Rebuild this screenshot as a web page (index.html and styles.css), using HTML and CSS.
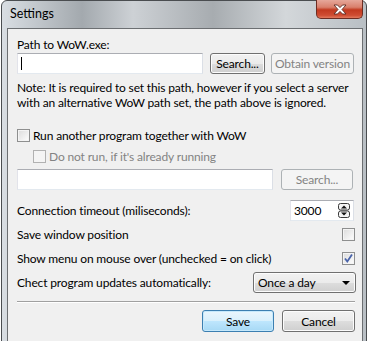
FILE: index.html
```html
<!DOCTYPE html>
<html lang="en">
<head>
    <meta charset="UTF-8">
    <title>Settings</title>
    <link rel="stylesheet" href="styles.css">
</head>
<body>

    <div class="ventana">
        <div class="titulo">
            <span class="titulo-texto">Settings</span>
            <div class="cerrar">
                <svg width="14" height="11" viewBox="0 0 14 11">
                    <path d="M1 1 L4.5 1 L7 3.6 L9.5 1 L13 1 L9 5.5 L13 10 L9.5 10 L7 7.4 L4.5 10 L1 10 L5 5.5 Z" fill="#fff" stroke="#5b2a22" stroke-width="0.9"/>
                </svg>
            </div>
        </div>

        <div class="cliente">
            <div class="etiqueta">Path to WoW.exe:</div>

            <div class="fila fila-ruta">
                <div class="caja caja-ruta"><span class="cursor"></span></div>
                <div class="boton boton-buscar">Search...</div>
                <div class="boton deshabilitado boton-version">Obtain version</div>
            </div>

            <p class="nota">Note: It is required to set this path, however if you select a server<br>with an alternative WoW path set, the path above is ignored.</p>

            <div class="fila fila-check fila-otro">
                <span class="check"></span>
                <span>Run another program together with WoW</span>
            </div>

            <div class="fila fila-check fila-sub gris">
                <span class="check deshabilitado"></span>
                <span>Do not run, if it's already running</span>
            </div>

            <div class="fila fila-programa">
                <div class="caja caja-programa"></div>
                <div class="boton deshabilitado boton-buscar2">Search...</div>
            </div>

            <div class="fila fila-opcion fila-timeout">
                <span>Connection timeout (miliseconds):</span>
                <div class="caja caja-numero">
                    <span>3000</span>
                    <svg class="flechas" width="12" height="15" viewBox="0 0 12 15">
                        <rect x="0.5" y="0.5" width="11" height="6.5" rx="2" fill="#f4f4f4" stroke="#3a3a3a"/>
                        <rect x="0.5" y="8" width="11" height="6.5" rx="2" fill="#f4f4f4" stroke="#3a3a3a"/>
                        <path d="M3 5.5 L6 2.5 L9 5.5 Z" fill="#111"/>
                        <path d="M3 9.5 L6 12.5 L9 9.5 Z" fill="#111"/>
                    </svg>
                </div>
            </div>

            <div class="fila fila-opcion fila-posicion">
                <span>Save window position</span>
                <span class="check"></span>
            </div>

            <div class="fila fila-opcion fila-menu">
                <span>Show menu on mouse over (unchecked = on click)</span>
                <span class="check marcado">
                    <svg width="11" height="11" viewBox="0 0 11 11">
                        <path d="M2 5.5 L4.3 8.5 L9 1.5" fill="none" stroke="#4a64aa" stroke-width="1.8"/>
                    </svg>
                </span>
            </div>

            <div class="fila fila-opcion fila-updates">
                <span>Chect program updates automatically:</span>
                <div class="boton combo">
                    <span>Once a day</span>
                    <svg width="8" height="4" viewBox="0 0 8 4"><path d="M0 0 L8 0 L4 4 Z" fill="#000"/></svg>
                </div>
            </div>

            <div class="separador"></div>

            <div class="fila fila-botones">
                <div class="boton principal">Save</div>
                <div class="boton boton-cancelar">Cancel</div>
            </div>
        </div>
    </div>

</body>
</html>
```

FILE: styles.css
```css
* {
    margin: 0;
    padding: 0;
    box-sizing: border-box;
}

body {
    background-color: #fff;
    font-family: Lato, "Noto Sans", sans-serif;
    font-size: 12px;
    letter-spacing: -0.15px;
    color: #000;
    overflow: hidden;
    white-space: nowrap;
}

.ventana {
    position: relative;
    margin-left: 1px;
    width: 366px;
    height: 370px;
    border: 1px solid #4a4d50;
    border-radius: 6px 6px 0 0;
    padding: 0 3px 0 5px;
    background: linear-gradient(90deg, #d9dee3 0%, #a3a9ae 22%, #cdd1d5 36%, #a7acb0 58%, #d3d7da 78%, #b9bfc4 100%);
}

.titulo {
    height: 27px;
    display: flex;
    align-items: center;
}

.titulo-texto {
    padding-left: 3px;
    padding-bottom: 3px;
    font-size: 12.5px;
    letter-spacing: 0;
    color: #000;
}

.cerrar {
    position: absolute;
    top: -1px;
    left: 314px;
    width: 47px;
    height: 19px;
    border: 1px solid #6d2d22;
    border-top: none;
    border-radius: 0 0 5px 5px;
    background: linear-gradient(#e6a79a 0%, #d9806c 40%, #c2391f 55%, #cf4d32 85%, #e27a5e 100%);
    display: flex;
    justify-content: center;
    align-items: center;
}

.cliente {
    border: 1px solid #6c6f72;
    background-color: #f0f0f0;
    height: 340px;
    padding: 8px 7px 0 9px;
}

.etiqueta {
    height: 15px;
    line-height: 15px;
}

.fila {
    display: flex;
    align-items: center;
}

.caja {
    height: 21px;
    background-color: #fff;
    border: 1px solid #abadb3;
    border-left-color: #e2e3ea;
    border-right-color: #dbdfe6;
    border-bottom-color: #e3e9ef;
}

.boton {
    height: 21px;
    border: 1px solid #707070;
    border-radius: 3px;
    background: linear-gradient(#f2f2f2 0%, #ebebeb 50%, #dddddd 51%, #cfcfcf 100%);
    box-shadow: inset 0 0 0 1px #fcfcfc;
    display: flex;
    justify-content: center;
    align-items: center;
}

.boton.deshabilitado {
    border-color: #adb2b5;
    background: #f4f4f4;
    box-shadow: none;
    color: #838383;
}

.fila-ruta {
    margin-top: 1px;
}

.caja-ruta {
    width: 186px;
    padding: 3px 0 0 3px;
}

.cursor {
    display: block;
    width: 1px;
    height: 13px;
    background-color: #000;
}

.boton-buscar {
    margin-left: 7px;
    width: 55px;
}

.boton-version {
    margin-left: 6px;
    width: 83px;
}

.nota {
    margin-top: 6px;
    line-height: 15px;
}

.fila-check {
    height: 13px;
}

.check {
    width: 13px;
    height: 13px;
    border: 1px solid #8e8f8f;
    background: linear-gradient(135deg, #dcdcdc 0%, #f0f0f0 60%, #fefefe 100%);
    box-shadow: inset 0 0 0 1px #f4f4f4;
    display: flex;
    justify-content: center;
    align-items: center;
}

.check.deshabilitado {
    border-color: #b1b1b1;
    background: #f4f4f4;
    box-shadow: none;
}

.fila-check .check {
    margin-right: 3px;
}

.fila-otro {
    margin-top: 19px;
}

.fila-sub {
    margin-top: 8px;
    padding-left: 16px;
}

.gris {
    color: #838383;
}

.fila-programa {
    margin-top: 6px;
}

.caja-programa {
    width: 256px;
}

.boton-buscar2 {
    margin-left: 8px;
    width: 72px;
}

.fila-opcion {
    justify-content: space-between;
}

.fila-timeout {
    height: 21px;
    margin-top: 10px;
    padding-right: 1px;
}

.caja-numero {
    width: 64px;
    display: flex;
    align-items: center;
    justify-content: space-between;
    padding: 0 3px 0 3px;
}

.fila-posicion {
    height: 13px;
    margin-top: 7px;
}

.fila-menu {
    height: 13px;
    margin-top: 11px;
}

.fila-updates {
    height: 21px;
    margin-top: 7px;
}

.combo {
    width: 103px;
    margin-right: -1px;
    justify-content: space-between;
    padding: 0 5px 0 4px;
}

.separador {
    margin-top: 8px;
    height: 2px;
    border-top: 1px solid #a0a0a0;
    border-bottom: 1px solid #fff;
}

.fila-botones {
    margin-top: 7px;
    justify-content: flex-end;
}

.principal {
    width: 72px;
    height: 22px;
    border-color: #3c7fb1;
    background: linear-gradient(#eaf6fd 0%, #d9f0fc 50%, #bee6fd 51%, #a7d9f5 100%);
    box-shadow: inset 0 0 0 1px #c6e9fc;
}

.boton-cancelar {
    margin-left: 8px;
    width: 73px;
    height: 22px;
}
```
